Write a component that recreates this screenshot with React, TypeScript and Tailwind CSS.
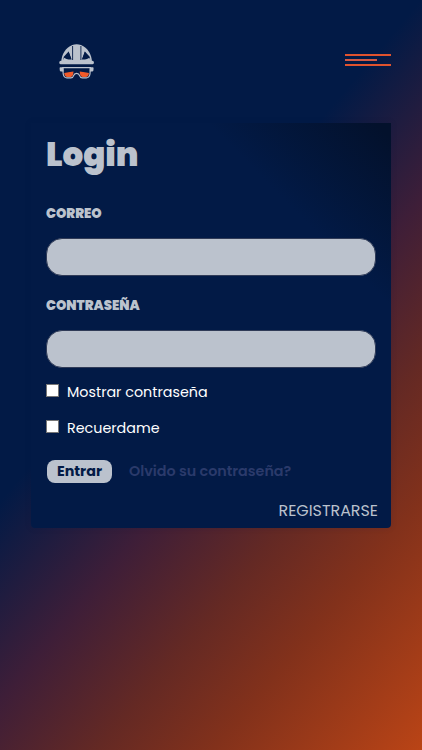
import { ReactNode, useState } from 'react'

function HelmetLogo() {
  return (
    <svg width="36" height="36" viewBox="0 0 36 36" fill="none" className="block">
      {/* helmet */}
      <path
        d="M2.200 19C2.600 11 6.500 4.800 13.300 1.900Q17.600 .5 22 1.900C28.700 4.800 32.700 11 33 19Z"
        fill="#bbc2cd"
      />
      <path d="M9.600 8.600L12.600 16.500L8 13.600ZM25.900 8.600L22.900 16.500L27.500 13.600Z" fill="#031a46" />
      <path d="M4.800 13.800L9.600 8.600L12.400 16.500H4.300ZM30.700 13.800L25.900 8.600L23.100 16.500H31.200Z" fill="#031a46" />
      <path d="M5 13L12.600 16.600L4 16.800ZM30.500 13L22.900 16.600L31.500 16.800Z" fill="#bbc2cd" transform="translate(0 1.800)" />
      <path d="M13.600 3V17M21.900 3V17" stroke="#031a46" strokeWidth=".9" />
      <rect x=".3" y="17.700" width="34.600" height="3.600" rx="1.500" fill="#bbc2cd" />
      {/* goggles */}
      <path
        d="M3.800 24.600H31.400L31 31Q30.300 34.900 27.300 34.900H23.300Q21.300 34.900 20.600 32.600Q19.900 30.300 17.600 30.300Q15.300 30.300 14.600 32.600Q13.900 34.900 11.900 34.900H7.900Q4.900 34.900 4.200 31Z"
        stroke="#bbc2cd"
        strokeWidth="1.200"
      />
      <path d="M.6 25Q.6 24.200 1.400 24.200H4.500V28.400H2Q1 28.400 .8 27.400ZM34.600 25Q34.600 24.200 33.800 24.200H30.700V28.400H33.200Q34.200 28.400 34.400 27.400Z" fill="#bbc2cd" />
      <path
        d="M5.200 30Q9 29.600 14.500 28.600Q14.300 33.900 11.700 33.900H8.300Q5.700 33.900 5.200 30ZM30 30Q26.200 29.600 20.700 28.600Q20.900 33.900 23.500 33.900H26.900Q29.500 33.900 30 30Z"
        fill="#f15a29"
      />
    </svg>
  )
}

interface TextFieldProps {
  id: string
  type: string
  label: ReactNode
}

function TextField({ id, type, label }: TextFieldProps) {
  return (
    <div className="flex flex-col gap-[14px]">
      <label htmlFor={id} className="h-5 text-[13.2px] leading-5 font-black whitespace-nowrap text-[#bbc2cd]">
        {label}
      </label>
      <input
        id={id}
        type={type}
        className="h-[38px] w-[330px] rounded-2xl border border-[#303b57] bg-[#bbc2cd] px-4 text-[#031a46] outline-none"
      />
    </div>
  )
}

interface CheckFieldProps {
  checked: boolean
  onChange: (value: boolean) => void
  children: ReactNode
}

function CheckField({ checked, onChange, children }: CheckFieldProps) {
  return (
    <label className="flex h-5 items-start gap-2 text-[14.3px] leading-[21px] whitespace-nowrap text-white">
      <input
        type="checkbox"
        checked={checked}
        onChange={(e) => onChange(e.target.checked)}
        className="mt-0.5 size-[13px] appearance-none border border-[#767676] bg-white checked:bg-[#f15a29]"
      />
      {children}
    </label>
  )
}

export default function App() {
  const [showPassword, setShowPassword] = useState(false)
  const [remember, setRemember] = useState(false)

  return (
    <div className="h-[750px] w-[422px] overflow-hidden bg-[linear-gradient(130deg,#021a46_40%,#3e1e38_56%,#642924_69%,#82311b_80%,#ba4416_100%)] font-['Poppins','Inter',sans-serif]">
      <header className="flex h-[123px] items-start justify-between pt-[43px] pr-[31px] pl-[59px]">
        <HelmetLogo />
        <button className="mt-[11px] flex w-[46px] flex-col gap-[3px]" aria-label="Menu">
          <span className="h-0.5 w-full bg-[#e0532e]" />
          <span className="h-0.5 w-8 bg-[#d05a45]" />
          <span className="h-0.5 w-full bg-[#e0532e]" />
        </button>
      </header>

      <main className="ml-[31px] h-[405px] w-[360px] rounded-b bg-[linear-gradient(45deg,#021a46_76%,#03112c_98%)] px-[15px] pt-[12px] shadow-[0_0_6px_rgba(2,26,70,0.15)]">
        <h1 className="h-10 text-[32.6px] leading-10 font-black text-[#bbc2cd]">Login</h1>
        <form className="pt-[29px]" onSubmit={(e) => e.preventDefault()}>
          <div className="flex flex-col gap-5">
            <TextField id="correo" type="email" label="CORREO" />
            <TextField id="password" type={showPassword ? 'text' : 'password'} label="CONTRASEÑA" />
          </div>
          <div className="flex flex-col gap-4 pt-[14px]">
            <CheckField checked={showPassword} onChange={setShowPassword}>
              <span>Mostrar contraseña</span>
            </CheckField>
            <CheckField checked={remember} onChange={setRemember}>
              <span>Recuerdame</span>
            </CheckField>
          </div>
          <div className="flex items-center gap-[17px] pt-[22px] pl-px text-[14.3px] whitespace-nowrap">
            <button className="h-[23px] w-[65px] rounded-lg bg-[#bbc2cd] font-bold text-[#031a46]">Entrar</button>
            <a className="font-semibold text-[#2b3a6b]">Olvido su contraseña?</a>
          </div>
        </form>
        <div className="-mr-0.5 flex justify-end pt-4 text-[15.9px] leading-6 text-[#bbc2cd]">
          <a>REGISTRARSE</a>
        </div>
      </main>
    </div>
  )
}
